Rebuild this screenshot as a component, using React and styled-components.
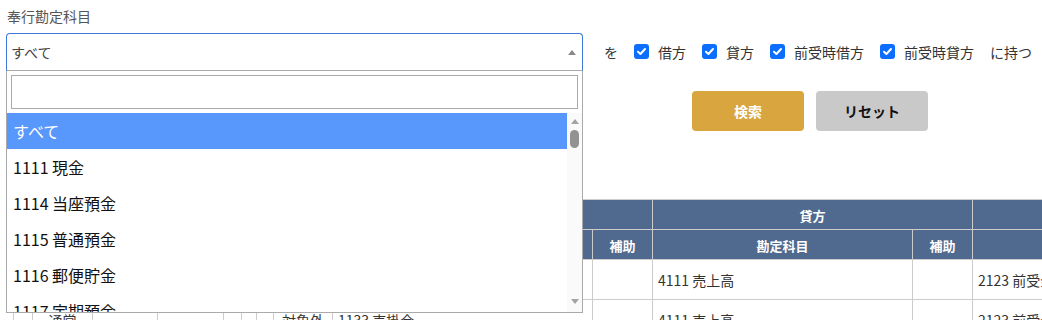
import React from "react";
import styled, { createGlobalStyle } from "styled-components";

const Global = createGlobalStyle`
  html, body { margin: 0; padding: 0; overflow: hidden; background: #fff; }
  body { font-family: "Noto Sans CJK JP", "Noto Sans", sans-serif; color: #333; }
  * { box-sizing: border-box; }
`;

const Page = styled.div`
  padding-left: 6px;
  width: 1042px;
`;

const FieldLabel = styled.div`
  margin-top: 6px;
  height: 20px;
  line-height: 20px;
  font-size: 14px;
  color: #555;
  padding-left: 1px;
`;

const TopRow = styled.div`
  margin-top: 7px;
  display: flex;
  align-items: flex-start;
`;

const SelectWrap = styled.div`
  position: relative;
  width: 577px;
  flex: none;
  z-index: 5;
`;

const Selection = styled.div`
  height: 38px;
  border: 1px solid #3c78d8;
  border-bottom-color: #aaa;
  border-radius: 4px 4px 0 0;
  display: flex;
  align-items: center;
  justify-content: space-between;
  padding: 0 6px 0 4px;
  font-size: 14px;
  color: #444;
  background: #fff;
`;

const Arrow = styled.span`
  width: 0;
  height: 0;
  border-style: solid;
  border-width: ${(p) => (p.$up ? "0 4px 5px 4px" : "5px 4px 0 4px")};
  border-color: ${(p) =>
    p.$up
      ? `transparent transparent ${p.$color || "#888"} transparent`
      : `${p.$color || "#888"} transparent transparent transparent`};
`;

const Dropdown = styled.div`
  position: absolute;
  top: 100%;
  left: 0;
  width: 100%;
  background: #fff;
  border: 1px solid #aaa;
  border-top: none;
`;

const SearchBox = styled.div`
  padding: 4px;
`;

const SearchInput = styled.input`
  display: block;
  width: 100%;
  height: 34px;
  border: 1px solid #aaa;
  outline: none;
  font: inherit;
  padding: 0 4px;
`;

const ResultsArea = styled.div`
  display: flex;
  height: 199px;
`;

const Options = styled.ul`
  list-style: none;
  margin: 0;
  padding: 0;
  flex: 1;
  overflow: hidden;
`;

const Option = styled.li`
  height: 36px;
  display: flex;
  align-items: center;
  padding: 0 6px;
  font-size: 16px;
  color: ${(p) => (p.$active ? "#fff" : "#111")};
  background: ${(p) => (p.$active ? "#5897fb" : "#fff")};
  white-space: nowrap;
`;

const ScrollTrack = styled.div`
  width: 15px;
  flex: none;
  background: #fafafa;
  display: flex;
  flex-direction: column;
  align-items: center;
  padding: 6px 0 8px;
`;

const Thumb = styled.div`
  width: 9px;
  height: 18px;
  margin-top: 6px;
  border-radius: 5px;
  background: #929292;
`;

const TrackSpacer = styled.div`
  flex: 1;
`;

const RightSide = styled.div`
  flex: 1;
  display: flex;
  flex-direction: column;
`;

const FilterRow = styled.div`
  height: 38px;
  display: flex;
  align-items: center;
  gap: 16px;
  padding-left: 21px;
  font-size: 14px;
  color: #333;
`;

const Word = styled.span`
  white-space: nowrap;
  line-height: 20px;
`;

const CheckItem = styled.label`
  display: flex;
  align-items: center;
  gap: 9px;
  white-space: nowrap;
`;

const Box = styled.span`
  width: 15px;
  height: 15px;
  border-radius: 3px;
  background: #0d6efd;
  display: flex;
  align-items: center;
  justify-content: center;
  margin-top: -2px;
`;

const ButtonRow = styled.div`
  margin-top: 20px;
  display: flex;
  gap: 12px;
  padding-left: 109px;
`;

const Button = styled.button`
  width: 112px;
  height: 40px;
  border: none;
  border-radius: 4px;
  font-family: inherit;
  font-size: 14px;
  font-weight: 700;
  background: ${(p) => (p.$primary ? "#d9a53e" : "#c9c9c9")};
  color: ${(p) => (p.$primary ? "#fff" : "#111")};
`;

const TableArea = styled.div`
  margin-top: 68px;
  margin-left: 7px;
`;

const Table = styled.table`
  border-collapse: collapse;
  table-layout: fixed;
  width: 1599px;
  font-size: 14px;
`;

const Th = styled.th`
  background: #4f6a8e;
  color: #fff;
  font-weight: 700;
  font-size: 13px;
  border: 1px solid #ccc;
  padding: 2px 4px 0;
  text-align: center;
  white-space: nowrap;
  overflow: hidden;
`;

const HeadRow = styled.tr`
  height: 30px;
`;

const BodyRow = styled.tr`
  height: 40px;
`;

const Td = styled.td`
  border: 1px solid #ccc;
  padding: 0 5px;
  color: #333;
  white-space: nowrap;
  overflow: hidden;
  text-align: ${(p) => (p.$center ? "center" : "left")};
`;

const check = (
  <svg width="11" height="11" viewBox="0 0 11 11">
    <path d="M2 5.8 L4.4 8 L9 3" fill="none" stroke="#fff" strokeWidth="2" strokeLinecap="round" strokeLinejoin="round" />
  </svg>
);

const options = ["すべて", "1111 現金", "1114 当座預金", "1115 普通預金", "1116 郵便貯金", "1117 定期預金", "1121 受取手形"];
const filters = ["借方", "貸方", "前受時借方", "前受時貸方"];
const cols = [19, 60, 65, 66, 18, 15, 17, 59, 260, 60, 260, 60, 260, 60, 260, 60];

const rows = [
  { kind: "通常", tax: "対象外", debit: "1133 売掛金", credit: "4111 売上高", pre: "2123 前受金" },
  { kind: "通常", tax: "対象外", debit: "1133 売掛金", credit: "4111 売上高", pre: "2123 前受金" },
];

export default function App() {
  return (
    <>
      <Global />
      <Page>
        <FieldLabel>奉行勘定科目</FieldLabel>
        <TopRow>
          <SelectWrap>
            <Selection>
              <span>すべて</span>
              <Arrow $up />
            </Selection>
            <Dropdown>
              <SearchBox>
                <SearchInput type="text" aria-label="検索" />
              </SearchBox>
              <ResultsArea>
                <Options>
                  {options.map((o, i) => (
                    <Option key={o} $active={i === 0}>{o}</Option>
                  ))}
                </Options>
                <ScrollTrack>
                  <Arrow $up $color="#a3a3a3" />
                  <Thumb />
                  <TrackSpacer />
                  <Arrow $color="#a3a3a3" />
                </ScrollTrack>
              </ResultsArea>
            </Dropdown>
          </SelectWrap>
          <RightSide>
            <FilterRow>
              <Word>を</Word>
              {filters.map((f) => (
                <CheckItem key={f}>
                  <Box>{check}</Box>
                  <Word>{f}</Word>
                </CheckItem>
              ))}
              <Word>に持つ</Word>
            </FilterRow>
            <ButtonRow>
              <Button $primary>検索</Button>
              <Button>リセット</Button>
            </ButtonRow>
          </RightSide>
        </TopRow>
        <TableArea>
          <Table>
            <colgroup>
              {cols.map((w, i) => (
                <col key={i} style={{ width: w }} />
              ))}
            </colgroup>
            <thead>
              <HeadRow>
                <Th rowSpan={2}>選</Th>
                <Th rowSpan={2}>区分</Th>
                <Th rowSpan={2}>日付</Th>
                <Th rowSpan={2}>伝票No</Th>
                <Th rowSpan={2} colSpan={3}>枝</Th>
                <Th rowSpan={2}>税区分</Th>
                <Th colSpan={2}>借方</Th>
                <Th colSpan={2}>貸方</Th>
                <Th colSpan={2}>前受時借方</Th>
                <Th colSpan={2}>前受時貸方</Th>
              </HeadRow>
              <HeadRow>
                <Th>勘定科目</Th>
                <Th>補助</Th>
                <Th>勘定科目</Th>
                <Th>補助</Th>
                <Th>勘定科目</Th>
                <Th>補助</Th>
                <Th>勘定科目</Th>
                <Th>補助</Th>
              </HeadRow>
            </thead>
            <tbody>
              {rows.map((r, i) => (
                <BodyRow key={i}>
                  <Td />
                  <Td $center>{r.kind}</Td>
                  <Td />
                  <Td />
                  <Td />
                  <Td />
                  <Td />
                  <Td $center>{r.tax}</Td>
                  <Td>{r.debit}</Td>
                  <Td />
                  <Td>{r.credit}</Td>
                  <Td />
                  <Td>{r.pre}</Td>
                  <Td />
                  <Td />
                  <Td />
                </BodyRow>
              ))}
            </tbody>
          </Table>
        </TableArea>
      </Page>
    </>
  );
}
